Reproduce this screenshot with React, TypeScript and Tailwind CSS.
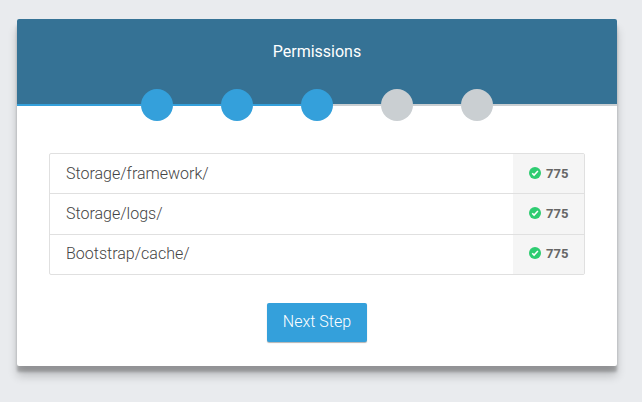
const steps = [true, true, true, false, false];
const folders = [
  { name: "Storage/framework/", row: "h-[39px]", label: "pt-2", mode: "pt-[7px]" },
  { name: "Storage/logs/", row: "h-[41px] border-t", label: "pt-2", mode: "pt-[7px]" },
  { name: "Bootstrap/cache/", row: "h-[40px] border-t", label: "pt-[7px]", mode: "pt-[6px]" },
];

export default function App() {
  return (
    <div className="h-[402px] w-[642px] overflow-hidden bg-[#e9ebee] pt-[19px] pl-[17px] font-[Roboto,sans-serif]">
      <main className="h-[347px] w-[600px] rounded-[2px] bg-white shadow-[0_10px_10px_rgba(0,0,0,0.19),0_6px_3px_rgba(0,0,0,0.23)]">
        <header className="h-[70px] rounded-t-[2px] bg-[#357295] pt-[21px] text-center text-[16px] leading-6 font-normal text-white">
          Permissions
        </header>
        <div className="flex h-8 items-center bg-[linear-gradient(#357295_0_15px,transparent_15px)]">
          <span className="h-[2px] w-[124px] bg-[#34a0db]" />
          {steps.map((done, i) => (
            <div key={i} className="flex items-center">
              <span className={`size-8 rounded-full ${done ? "bg-[#34a0db]" : "bg-[#cacfd2]"}`} />
              {i < 4 && <span className={`h-[2px] w-12 ${i < 2 ? "bg-[#34a0db]" : "bg-[#cacfd2]"}`} />}
            </div>
          ))}
          <span className="h-[2px] flex-1 bg-[#cacfd2]" />
        </div>
        <ul className="mx-8 mt-8 overflow-hidden rounded-[2px] border border-[#e0e0e0]">
          {folders.map(({ name, row, label, mode }) => (
            <li key={name} className={`flex border-[#e0e0e0] text-[16px] font-light text-[#444] ${row}`}>
              <span className={`flex-1 pl-4 leading-6 ${label}`}>{name}</span>
              <span className={`flex w-[71px] items-start gap-[5px] bg-[#f5f5f5] pl-4 text-[13px] leading-6 font-bold text-[#666] ${mode}`}>
                <svg viewBox="0 0 12 12" className="mt-[6px] size-3">
                  <circle cx="6" cy="6" r="6" fill="#2ecc71" />
                  <path d="m3.2 6.2 1.9 1.9 3.8-4" fill="none" stroke="white" strokeWidth="1.5" />
                </svg>
                <span className="pt-px">775</span>
              </span>
            </li>
          ))}
        </ul>
        <div className="mt-7 flex justify-center">
          <button className="h-[39px] w-[100px] rounded-[2px] bg-[#34a0db] pb-[2px] text-[16px] font-light text-white shadow-[0_1px_1px_rgba(0,0,0,0.3)]">
            Next Step
          </button>
        </div>
      </main>
    </div>
  );
}
